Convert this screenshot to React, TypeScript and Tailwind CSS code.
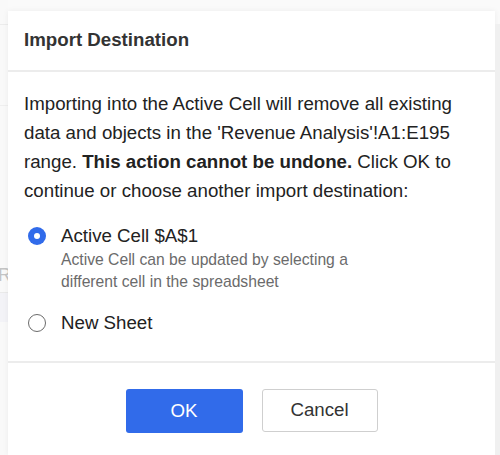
import React, { useState } from "react";

type Destination = "active" | "new";

function Radio({ checked }: { checked: boolean }) {
  return checked ? (
    <span className="flex h-[18px] w-[18px] shrink-0 items-center justify-center rounded-full bg-[#316bea]">
      <span className="h-[6px] w-[6px] rounded-full bg-white" />
    </span>
  ) : (
    <span className="h-[18px] w-[18px] shrink-0 rounded-full border-[1.5px] border-[#6b6b6b] bg-white" />
  );
}

export default function App() {
  const [dest, setDest] = useState<Destination>("active");

  return (
    <div
      className="relative flex h-[455px] w-[500px] overflow-hidden bg-[#fafafa]"
      style={{ fontFamily: '"Liberation Sans", Arial, sans-serif' }}
    >
      {/* spreadsheet peeking out behind the dialog */}
      <div className="flex w-[8px] shrink-0 flex-col bg-[#f9f9f9]">
        <div className="mt-[24px] h-px bg-[#ececec]" />
        <div className="mt-[80px] h-px bg-[#efefef]" />
        <div className="mt-[160px] overflow-hidden text-[18px] leading-none text-[#c4c4c4]">
          <span className="-ml-[2px]">R</span>
        </div>
        <div className="mt-[8px] h-[30px] border-t border-[#eaeaea] bg-[#f3f3f7]" />
      </div>

      <div className="mt-[11px] flex w-[487px] shrink-0 flex-col bg-white shadow-[0_0_6px_rgba(0,0,0,0.06)]">
        <div className="flex h-[61px] items-center border-b-2 border-[#ececec] px-[16px]">
          <h1 className="text-[18.7px] font-bold text-[#333]">Import Destination</h1>
        </div>

        <div className="px-[16px] pt-[17px]">
          <p className="text-[18.7px] leading-[29px] text-[#222]">
            Importing into the Active Cell will remove all existing data and objects in the 'Revenue
            Analysis'!A1:E195 range. <strong className="font-bold">This action cannot be undone.</strong>{" "}
            Click OK to continue or choose another import destination:
          </p>

          <div className="mt-[18px] flex flex-col">
            <button
              type="button"
              onClick={() => setDest("active")}
              className="flex items-start gap-[15px] pl-[4px] text-left"
            >
              <span className="flex h-[26px] items-center">
                <Radio checked={dest === "active"} />
              </span>
              <span className="flex flex-col">
                <span className="text-[18.7px] leading-[26px] text-[#222]">Active Cell $A$1</span>
                <span className="text-[15.7px] leading-[22px] text-[#6b6b6b]">
                  Active Cell can be updated by selecting a
                  <br />
                  different cell in the spreadsheet
                </span>
              </span>
            </button>

            <button
              type="button"
              onClick={() => setDest("new")}
              className="mt-[17px] flex items-center gap-[15px] pl-[4px] text-left"
            >
              <span className="flex h-[26px] items-center">
                <Radio checked={dest === "new"} />
              </span>
              <span className="text-[18.7px] leading-[26px] text-[#222]">New Sheet</span>
            </button>
          </div>
        </div>

        <div className="mt-[25px] border-t-2 border-[#ececec]" />

        <div className="flex justify-center gap-[19px] pt-[26px]">
          <button
            type="button"
            className="h-[44px] w-[117px] rounded-[3px] bg-[#316bea] text-[18.7px] text-white"
          >
            OK
          </button>
          <button
            type="button"
            className="h-[43px] w-[116px] rounded-[3px] border border-[#cfcfcf] bg-white text-[18.7px] text-[#333]"
          >
            Cancel
          </button>
        </div>
      </div>

      <div className="mt-[24px] flex-1 bg-[#f0f0f0]" />
    </div>
  );
}
